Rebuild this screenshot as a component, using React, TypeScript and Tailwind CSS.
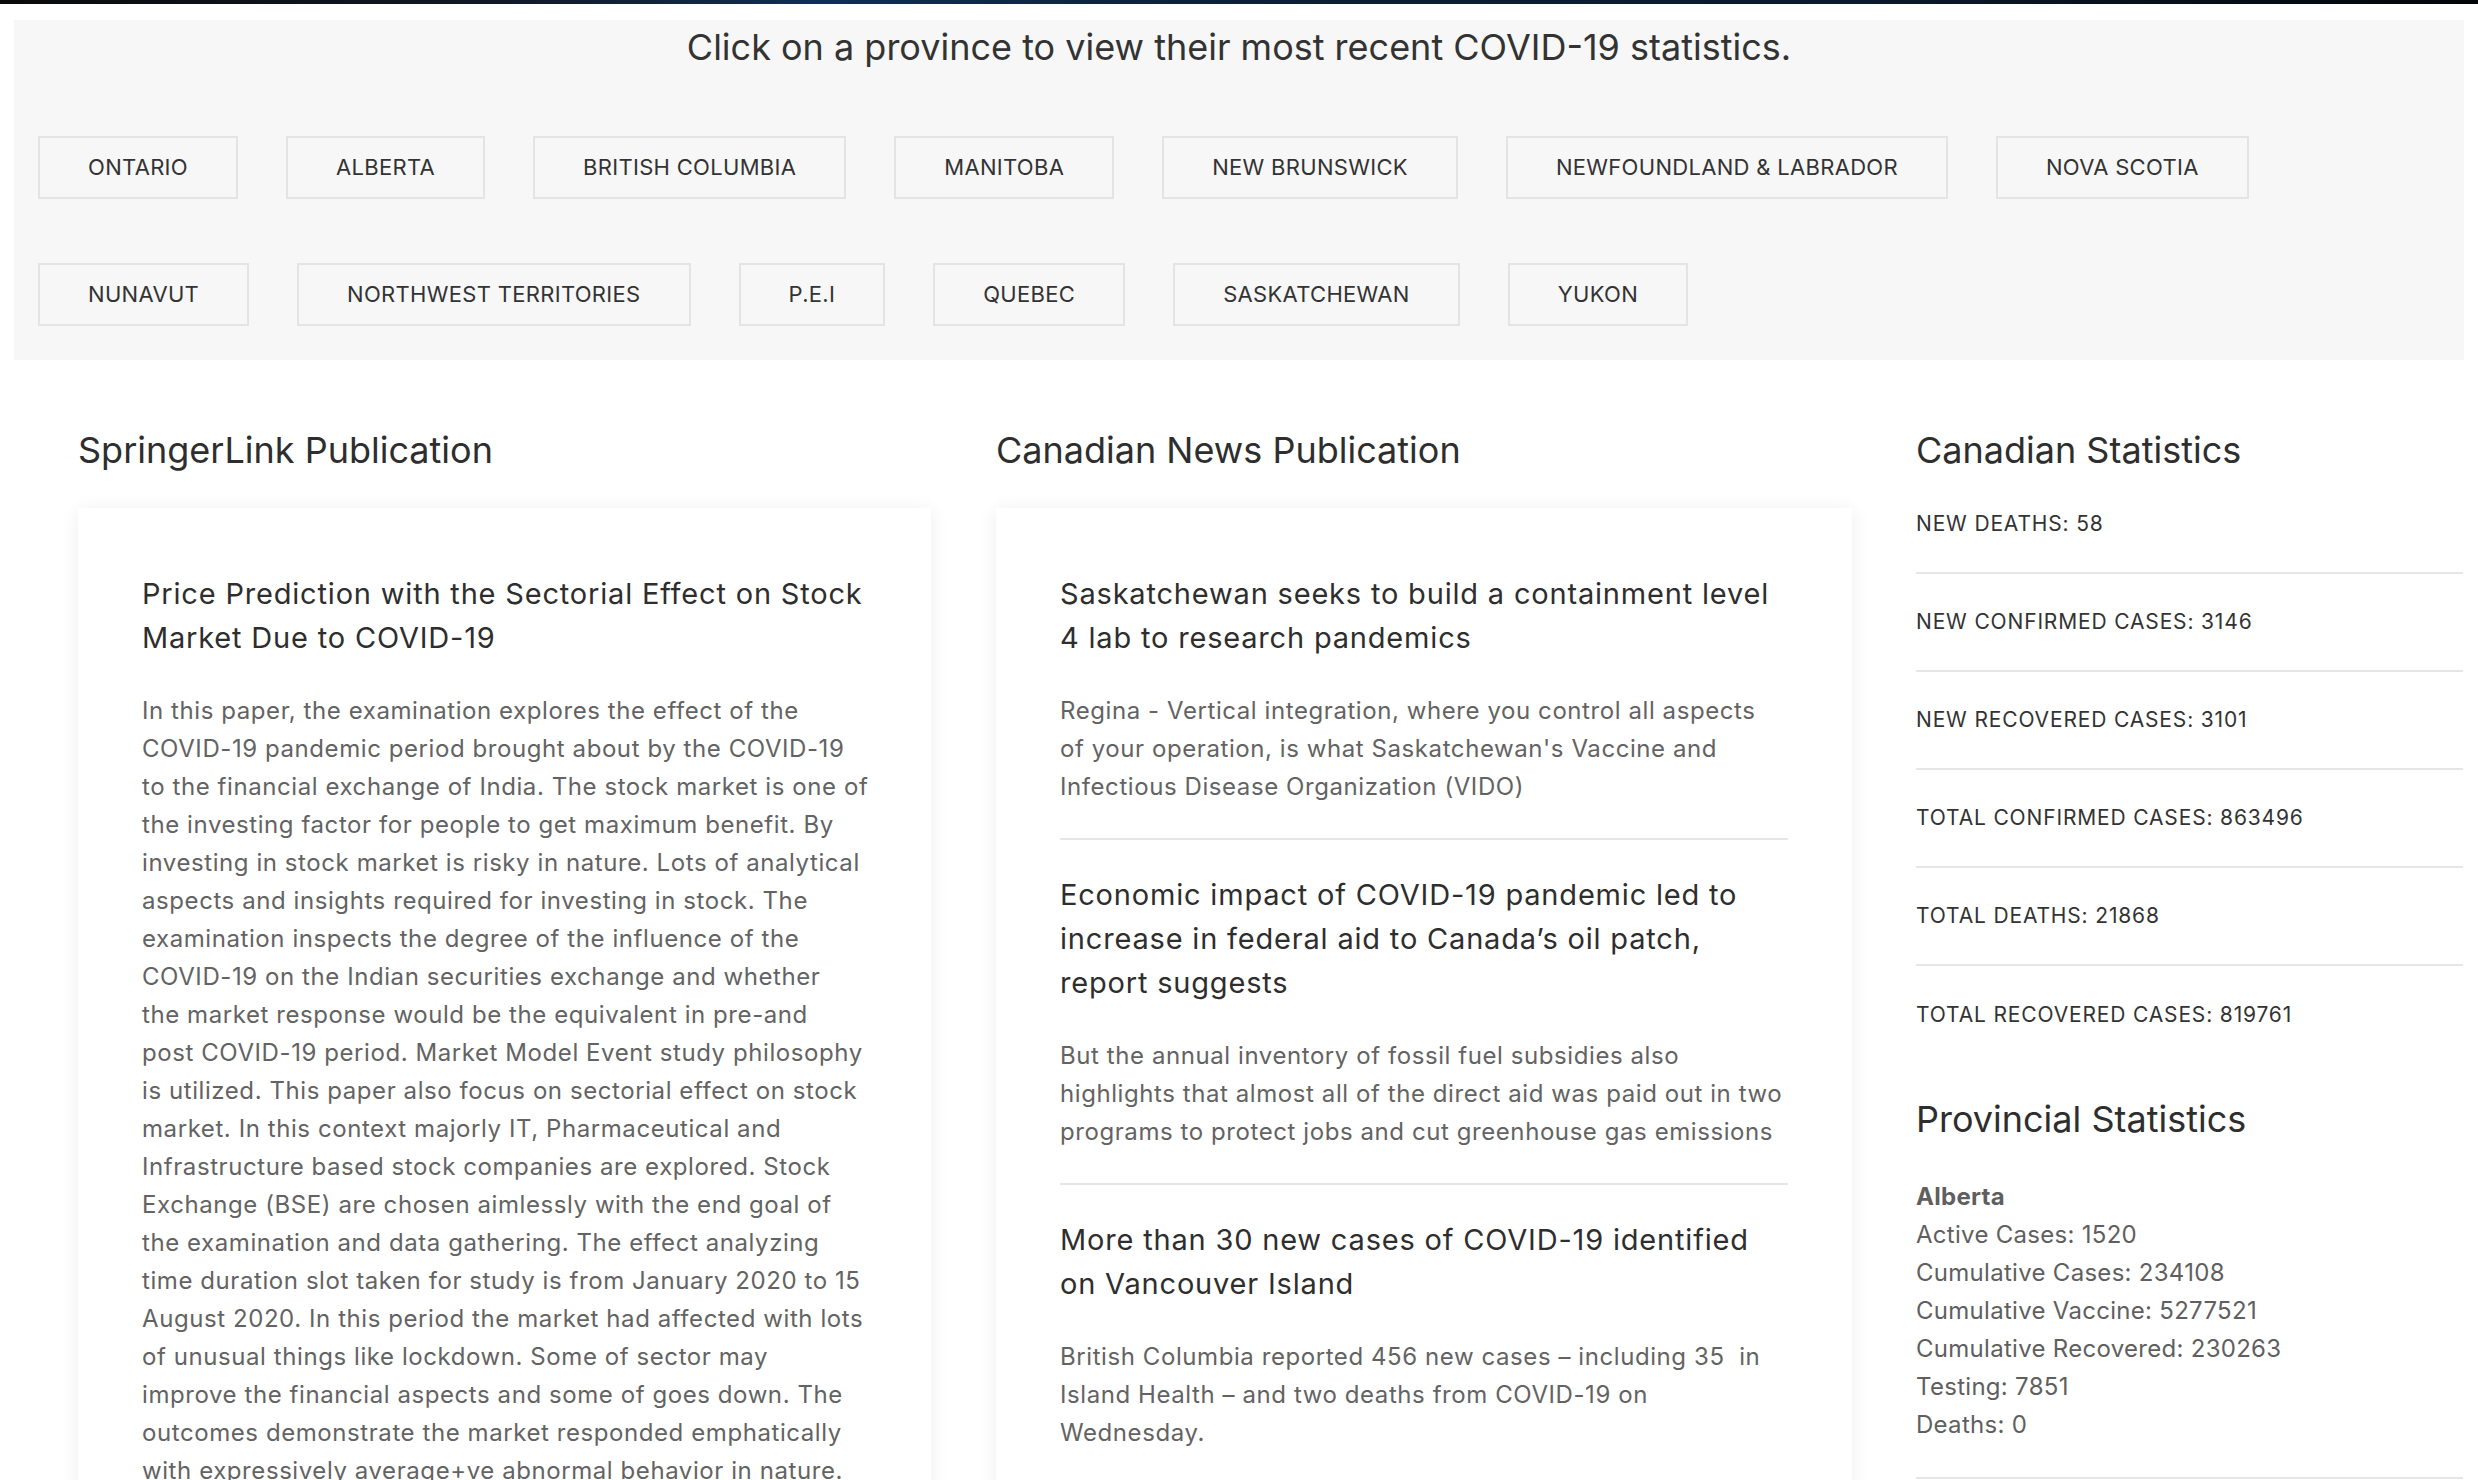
import React from 'react';

const provinces = [
  'ONTARIO',
  'ALBERTA',
  'BRITISH COLUMBIA',
  'MANITOBA',
  'NEW BRUNSWICK',
  'NEWFOUNDLAND & LABRADOR',
  'NOVA SCOTIA',
  'NUNAVUT',
  'NORTHWEST TERRITORIES',
  'P.E.I',
  'QUEBEC',
  'SASKATCHEWAN',
  'YUKON',
];

const abstractLines = [
  'In this paper, the examination explores the effect of the',
  'COVID-19 pandemic period brought about by the COVID-19',
  'to the financial exchange of India. The stock market is one of',
  'the investing factor for people to get maximum benefit. By',
  'investing in stock market is risky in nature. Lots of analytical',
  'aspects and insights required for investing in stock. The',
  'examination inspects the degree of the influence of the',
  'COVID-19 on the Indian securities exchange and whether',
  'the market response would be the equivalent in pre-and',
  'post COVID-19 period. Market Model Event study philosophy',
  'is utilized. This paper also focus on sectorial effect on stock',
  'market. In this context majorly IT, Pharmaceutical and',
  'Infrastructure based stock companies are explored. Stock',
  'Exchange (BSE) are chosen aimlessly with the end goal of',
  'the examination and data gathering. The effect analyzing',
  'time duration slot taken for study is from January 2020 to 15',
  'August 2020. In this period the market had affected with lots',
  'of unusual things like lockdown. Some of sector may',
  'improve the financial aspects and some of goes down. The',
  'outcomes demonstrate the market responded emphatically',
  'with expressively average+ve abnormal behavior in nature.',
];

const news = [
  {
    title: ['Saskatchewan seeks to build a containment level', '4 lab to research pandemics'],
    body: [
      'Regina - Vertical integration, where you control all aspects',
      "of your operation, is what Saskatchewan's Vaccine and",
      'Infectious Disease Organization (VIDO)',
    ],
  },
  {
    title: ['Economic impact of COVID-19 pandemic led to', 'increase in federal aid to Canada’s oil patch,', 'report suggests'],
    body: [
      'But the annual inventory of fossil fuel subsidies also',
      'highlights that almost all of the direct aid was paid out in two',
      'programs to protect jobs and cut greenhouse gas emissions',
    ],
  },
  {
    title: ['More than 30 new cases of COVID-19 identified', 'on Vancouver Island'],
    body: [
      'British Columbia reported 456 new cases – including 35\u00a0 in',
      'Island Health – and two deaths from COVID-19 on',
      'Wednesday.',
    ],
  },
];

const canadaStats = [
  'NEW DEATHS: 58',
  'NEW CONFIRMED CASES: 3146',
  'NEW RECOVERED CASES: 3101',
  'TOTAL CONFIRMED CASES: 863496',
  'TOTAL DEATHS: 21868',
  'TOTAL RECOVERED CASES: 819761',
];

const albertaStats = [
  'Active Cases: 1520',
  'Cumulative Cases: 234108',
  'Cumulative Vaccine: 5277521',
  'Cumulative Recovered: 230263',
  'Testing: 7851',
  'Deaths: 0',
];

const Lines: React.FC<{ lines: string[] }> = ({ lines }) => (
  <>
    {lines.map((l, i) => (
      <span key={i} className="block whitespace-nowrap">{l}</span>
    ))}
  </>
);

const Heading: React.FC<{ children: React.ReactNode }> = ({ children }) => (
  <h2 className="text-[36px] leading-[44px] text-[#2e2e2e] font-normal">{children}</h2>
);

export default function App() {
  return (
    <div className="min-h-screen bg-white font-['Inter',sans-serif] overflow-hidden">
      <div className="h-[4px] bg-[linear-gradient(90deg,#0a0a0a_0%,#111827_20%,#0f2f52_33%,#0b1f38_50%,#0a1a2e_75%,#030508_100%)]" />

      {/* province picker */}
      <div className="mx-[14px] mt-[16px] bg-[#f7f7f7] pb-[2px]">
        <h1 className="text-center text-[36px] leading-[54px] text-[#333] font-normal">
          Click on a province to view their most recent COVID-19 statistics.
        </h1>
        <div className="mt-[30px] flex flex-wrap">
          {provinces.map(p => (
            <button
              key={p}
              className="mx-[24px] my-[32px] h-[63px] px-[48px] border-2 border-[#e4e4e4] bg-[#f7f7f7] text-[22px] tracking-[0.014em] text-[#333] whitespace-nowrap"
            >
              {p}
            </button>
          ))}
        </div>
      </div>

      <div className="mt-[68px] flex pl-[78px] pr-[15px]">
        {/* SpringerLink */}
        <div className="w-[853px] shrink-0">
          <Heading>SpringerLink Publication</Heading>
          <div className="mt-[36px] bg-white px-[64px] pt-[64px] pb-[64px] shadow-[0_2px_18px_rgba(0,0,0,0.07)]">
            <h3 className="text-[29px] leading-[44px] tracking-[0.028em] text-[#2e2e2e]">
              <Lines lines={['Price Prediction with the Sectorial Effect on Stock', 'Market Due to COVID-19']} />
            </h3>
            <p className="mt-[32px] text-[24px] leading-[38px] tracking-[0.024em] text-[#636363]">
              <Lines lines={abstractLines} />
            </p>
          </div>
        </div>

        {/* Canadian News */}
        <div className="ml-[65px] w-[856px] shrink-0">
          <Heading>Canadian News Publication</Heading>
          <div className="mt-[36px] bg-white px-[64px] pt-[64px] pb-[64px] shadow-[0_2px_18px_rgba(0,0,0,0.07)]">
            {news.map((n, i) => (
              <div key={i} className={i > 0 ? 'border-t-2 border-[#e6e6e6] pt-[33px]' : ''}>
                <h3 className="text-[29px] leading-[44px] tracking-[0.028em] text-[#2e2e2e]">
                  <Lines lines={n.title} />
                </h3>
                <p className="mt-[32px] pb-[32px] text-[24px] leading-[38px] tracking-[0.024em] text-[#636363]">
                  <Lines lines={n.body} />
                </p>
              </div>
            ))}
          </div>
        </div>

        {/* Stats */}
        <div className="ml-[64px] flex-1">
          <Heading>Canadian Statistics</Heading>
          <ul className="mt-[4px]">
            {canadaStats.map((s, i) => (
              <li
                key={s}
                className={`h-[98px] flex items-center text-[21px] tracking-[0.04em] text-[#333] ${i < canadaStats.length - 1 ? 'border-b-2 border-[#e6e6e6]' : ''}`}
              >
                {s}
              </li>
            ))}
          </ul>
          <div className="mt-[33px]">
            <Heading>Provincial Statistics</Heading>
          </div>
          <div className="mt-[37px] pb-[33px] border-b-2 border-[#e6e6e6] text-[24px] leading-[38px] tracking-[0.012em] text-[#5f5f5f]">
            <div className="font-bold">Alberta</div>
            {albertaStats.map(s => (
              <div key={s}>{s}</div>
            ))}
          </div>
        </div>
      </div>
    </div>
  );
}
